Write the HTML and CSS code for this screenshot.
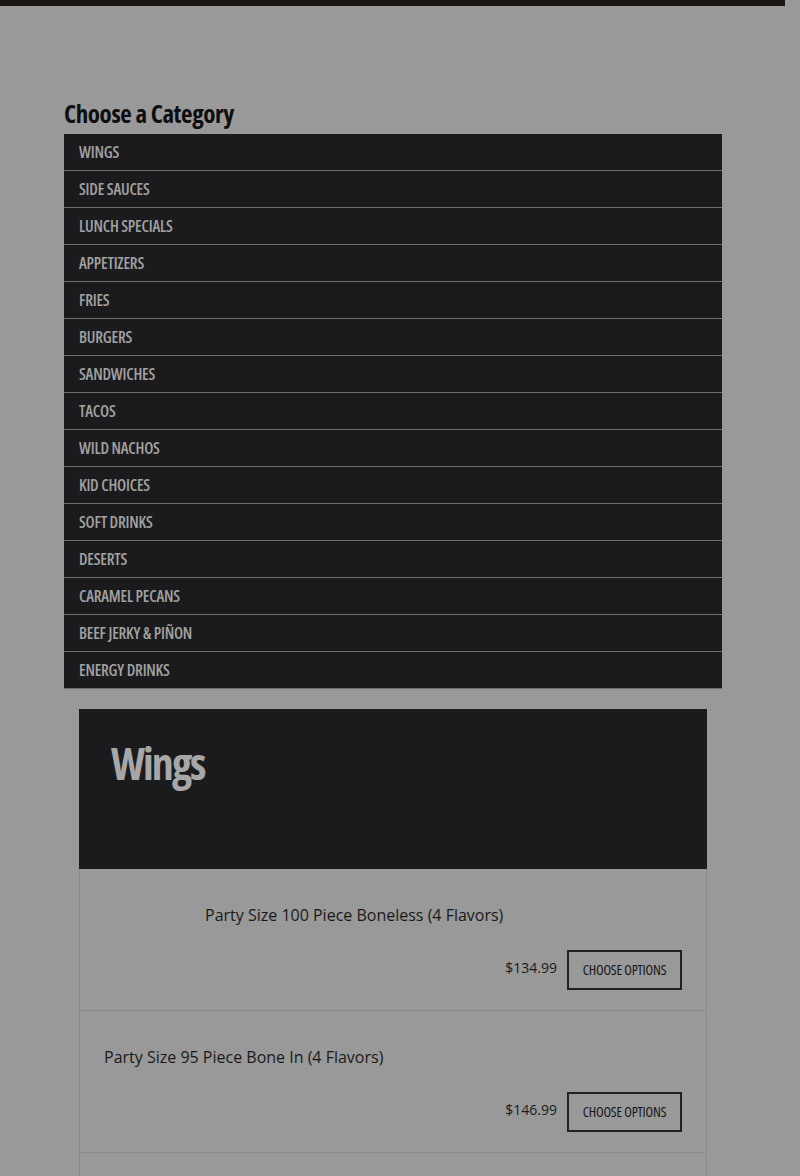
FILE: index.html
```html
<!DOCTYPE html>
<html>
<head>
<meta charset="utf-8">
<link rel="stylesheet" href="styles.css">
</head>
<body>
<div class="topbar"></div>
<main class="main">
  <h2 class="cat-title">Choose a Category</h2>
  <ul class="cat-list">
    <li class="cat-item">Wings</li>
    <li class="cat-item">Side Sauces</li>
    <li class="cat-item">Lunch Specials</li>
    <li class="cat-item">Appetizers</li>
    <li class="cat-item">Fries</li>
    <li class="cat-item">Burgers</li>
    <li class="cat-item">Sandwiches</li>
    <li class="cat-item">Tacos</li>
    <li class="cat-item">Wild Nachos</li>
    <li class="cat-item">Kid Choices</li>
    <li class="cat-item">Soft Drinks</li>
    <li class="cat-item">Deserts</li>
    <li class="cat-item">Caramel Pecans</li>
    <li class="cat-item">Beef Jerky &amp; Piñon</li>
    <li class="cat-item">Energy Drinks</li>
  </ul>
  <section class="menu-section">
    <div class="section-head"><h1 class="section-title">Wings</h1></div>
    <div class="product">
      <div class="product-top">
        <div class="product-img"></div>
        <div class="product-name">Party Size 100 Piece Boneless (4 Flavors)</div>
      </div>
      <div class="product-bottom">
        <span class="price">$134.99</span>
        <button class="btn">Choose Options</button>
      </div>
    </div>
    <div class="product">
      <div class="product-top">
        <div class="product-name">Party Size 95 Piece Bone In (4 Flavors)</div>
      </div>
      <div class="product-bottom">
        <span class="price">$146.99</span>
        <button class="btn">Choose Options</button>
      </div>
    </div>
    <div class="product"></div>
  </section>
</main>
</body>
</html>
```
FILE: styles.css
```css
html, body {
  margin: 0;
  padding: 0;
  background: #999999;
}
body {
  height: 1176px;
  overflow: hidden;
}
.topbar {
  width: 785px;
  height: 6px;
  background: #1a1614;
}
.main {
  width: 658px;
  margin-left: 64px;
  padding-top: 89px;
}
.cat-title {
  margin: 0 0 3px;
  font-family: "Open Sans", sans-serif;
  font-stretch: 75%;
  font-weight: bold;
  font-size: 25px;
  line-height: 36px;
  letter-spacing: -0.4px;
  color: #0e0e0e;
}
.cat-list {
  list-style: none;
  margin: 0;
  padding: 0;
  background: #1b1b1d;
  border-bottom: 1px solid #6e6e6e;
}
.cat-item {
  height: 36px;
  line-height: 37px;
  padding-left: 15px;
  border-top: 1px solid #6e6e6e;
  font-family: "Open Sans", sans-serif;
  font-stretch: 75%;
  font-weight: 600;
  font-size: 16px;
  letter-spacing: -0.2px;
  text-transform: uppercase;
  color: #a2a2a2;
}
.cat-item:first-child {
  border-top: none;
}
.menu-section {
  margin: 20px 15px 0;
}
.section-head {
  height: 160px;
  background: #1b1b1d;
  padding: 24px 32px 0;
  box-sizing: border-box;
}
.section-title {
  margin: 0;
  font-family: "Open Sans", sans-serif;
  font-stretch: 75%;
  font-weight: bold;
  font-size: 44px;
  line-height: 60px;
  letter-spacing: -2px;
  color: #a7a7a7;
}
.product {
  height: 141px;
  border: 1px solid #8a8a8a;
  border-top: none;
  padding: 0 24px;
  display: flex;
  flex-direction: column;
}
.product-top {
  display: flex;
  padding-top: 34px;
  height: 40px;
}
.product-img {
  width: 101px;
  flex: none;
}
.product-name {
  font-family: "Open Sans", sans-serif;
  font-size: 16px;
  line-height: 24px;
  color: #1a1a1a;
}
.product-bottom {
  display: flex;
  justify-content: flex-end;
  align-items: center;
  gap: 10px;
  margin-top: 7px;
}
.price {
  font-family: "Open Sans", sans-serif;
  font-size: 14px;
  color: #1a1a1a;
  margin-top: -5px;
}
.btn {
  width: 115px;
  height: 40px;
  border: 2px solid #222;
  background: transparent;
  font-family: "Open Sans", sans-serif;
  font-stretch: 75%;
  font-weight: 500;
  font-size: 14px;
  line-height: 34px;
  letter-spacing: -0.2px;
  text-transform: uppercase;
  color: #141414;
  padding: 0 0 1px;
}
```
